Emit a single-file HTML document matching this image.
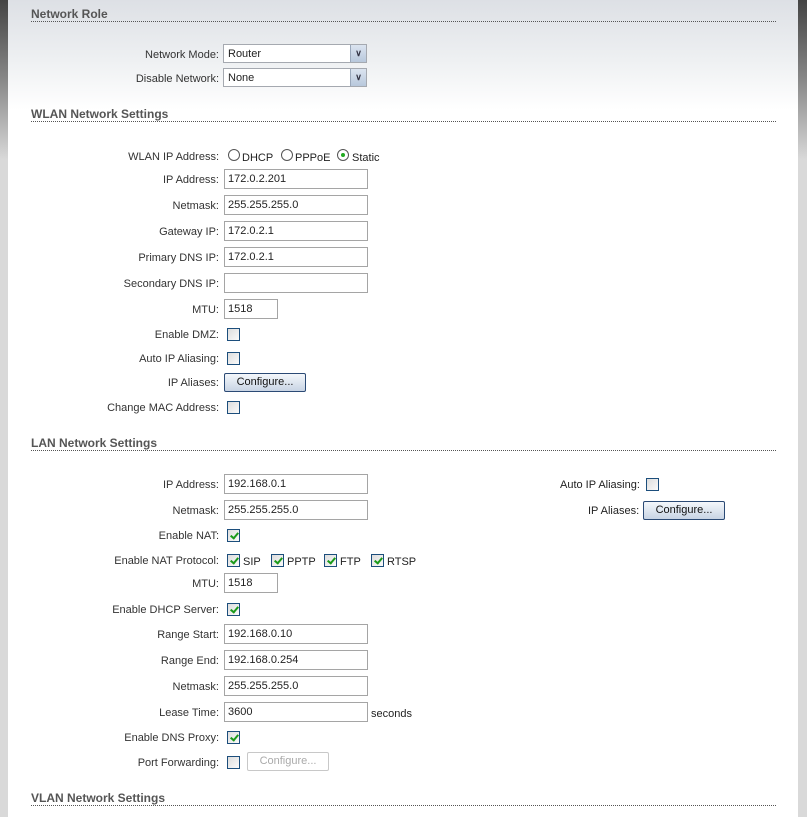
<!DOCTYPE html>
<html><head><meta charset="utf-8"><style>
*{margin:0;padding:0;box-sizing:border-box}
body{width:807px;height:817px;position:relative;overflow:hidden;font-family:"Liberation Sans",Arial,sans-serif;font-size:11px;color:#222;background:linear-gradient(#dde0e5 0,#eef0f2 60px,#fff 110px,#fff 100%)}
.ls,.rs{position:absolute;top:0;height:817px;background:linear-gradient(#444 0,#888 80px,#d9d9d9 160px,#d9d9d9 100%)}
.ls{left:0;width:8px}.rs{left:798px;width:9px}
.h{position:absolute;left:31px;width:745px;font-weight:bold;font-size:12px;color:#555;border-bottom:1px dotted #555;height:14px;line-height:12px}
.l{position:absolute;right:588px;line-height:14px;white-space:nowrap;color:#333}
.i{position:absolute;left:224px;width:144px;height:20px;border:1px solid #a5a5a5;background:#fff;padding-left:3px;line-height:19px}
.s{position:absolute;left:223px;width:144px;height:19px;border:1px solid #a5a9b0;background:#fff;padding-left:4px;line-height:18px}
.s b{position:absolute;right:0;top:0;width:16px;height:17px;background:linear-gradient(#dbe4f0,#b8c8dc);border-left:1px solid #9aa8bb;font-size:9px;text-align:center;line-height:17px;color:#334}
.c{position:absolute;width:13px;height:13px;border:1px solid #1c4e7c;background:linear-gradient(135deg,#ddd,#fafafa)}
.c.k::after{content:"";position:absolute;left:3.5px;top:1px;width:3px;height:6px;border:solid #1a9a1a;border-width:0 2px 2px 0;transform:rotate(40deg)}
.btn{position:absolute;width:82px;height:19px;border:1px solid #2b4a75;border-radius:2px;background:linear-gradient(#f4f7fb,#c8d4e4);text-align:center;line-height:17px;color:#111}
.btn.d{border:1px solid #c8c8c8;background:#fff;color:#aaa}
.r{position:absolute;width:12px;height:12px;border:1px solid #555;border-radius:50%;background:#fff}
.r.on::after{content:"";position:absolute;left:3px;top:3px;width:4px;height:4px;border-radius:50%;background:#2a2}
.x{position:absolute;line-height:14px}
</style></head><body>
<div class="ls"></div><div class="rs"></div>

<div class="h" style="top:8px">Network Role</div>
<div class="l" style="top:48px">Network Mode:</div><div class="s" style="top:44px">Router<b>&#8744;</b></div>
<div class="l" style="top:72px">Disable Network:</div><div class="s" style="top:68px">None<b>&#8744;</b></div>

<div class="h" style="top:108px">WLAN Network Settings</div>
<div class="l" style="top:150px">WLAN IP Address:</div>
<div class="r" style="left:228px;top:149px"></div><div class="x" style="left:242px;top:151px">DHCP</div>
<div class="r" style="left:281px;top:149px"></div><div class="x" style="left:295px;top:151px">PPPoE</div>
<div class="r on" style="left:337px;top:149px"></div><div class="x" style="left:352px;top:151px">Static</div>
<div class="l" style="top:173px">IP Address:</div><div class="i" style="top:169px">172.0.2.201</div>
<div class="l" style="top:199px">Netmask:</div><div class="i" style="top:195px">255.255.255.0</div>
<div class="l" style="top:225px">Gateway IP:</div><div class="i" style="top:221px">172.0.2.1</div>
<div class="l" style="top:251px">Primary DNS IP:</div><div class="i" style="top:247px">172.0.2.1</div>
<div class="l" style="top:277px">Secondary DNS IP:</div><div class="i" style="top:273px"></div>
<div class="l" style="top:303px">MTU:</div><div class="i" style="top:299px;width:54px">1518</div>
<div class="l" style="top:328px">Enable DMZ:</div><div class="c" style="left:227px;top:328px"></div>
<div class="l" style="top:352px">Auto IP Aliasing:</div><div class="c" style="left:227px;top:352px"></div>
<div class="l" style="top:376px">IP Aliases:</div><div class="btn" style="left:224px;top:373px">Configure...</div>
<div class="l" style="top:401px">Change MAC Address:</div><div class="c" style="left:227px;top:401px"></div>

<div class="h" style="top:437px">LAN Network Settings</div>
<div class="l" style="top:478px">IP Address:</div><div class="i" style="top:474px">192.168.0.1</div>
<div class="l" style="top:504px">Netmask:</div><div class="i" style="top:500px">255.255.255.0</div>
<div class="x" style="left:560px;top:478px">Auto IP Aliasing:</div><div class="c" style="left:646px;top:478px"></div>
<div class="x" style="left:588px;top:504px">IP Aliases:</div><div class="btn" style="left:643px;top:501px">Configure...</div>
<div class="l" style="top:529px">Enable NAT:</div><div class="c k" style="left:227px;top:529px"></div>
<div class="l" style="top:554px">Enable NAT Protocol:</div>
<div class="c k" style="left:227px;top:554px"></div><div class="x" style="left:243px;top:555px">SIP</div>
<div class="c k" style="left:271px;top:554px"></div><div class="x" style="left:287px;top:555px">PPTP</div>
<div class="c k" style="left:324px;top:554px"></div><div class="x" style="left:340px;top:555px">FTP</div>
<div class="c k" style="left:371px;top:554px"></div><div class="x" style="left:387px;top:555px">RTSP</div>
<div class="l" style="top:577px">MTU:</div><div class="i" style="top:573px;width:54px">1518</div>
<div class="l" style="top:603px">Enable DHCP Server:</div><div class="c k" style="left:227px;top:603px"></div>
<div class="l" style="top:628px">Range Start:</div><div class="i" style="top:624px">192.168.0.10</div>
<div class="l" style="top:654px">Range End:</div><div class="i" style="top:650px">192.168.0.254</div>
<div class="l" style="top:680px">Netmask:</div><div class="i" style="top:676px">255.255.255.0</div>
<div class="l" style="top:706px">Lease Time:</div><div class="i" style="top:702px">3600</div><div class="x" style="left:371px;top:707px">seconds</div>
<div class="l" style="top:731px">Enable DNS Proxy:</div><div class="c k" style="left:227px;top:731px"></div>
<div class="l" style="top:756px">Port Forwarding:</div><div class="c" style="left:227px;top:756px"></div><div class="btn d" style="left:247px;top:752px">Configure...</div>

<div class="h" style="top:792px">VLAN Network Settings</div>
</body></html>
